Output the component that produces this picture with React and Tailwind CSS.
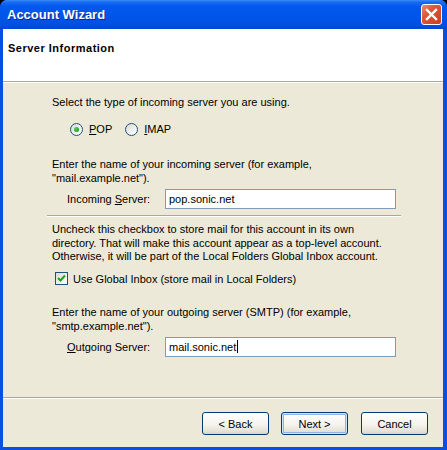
import React from "react";

function Radio({ checked }) {
  return (
    <span className="flex h-[13px] w-[13px] shrink-0 items-center justify-center rounded-full border border-[#1c5180] bg-[linear-gradient(135deg,#dcdcd5,#ffffff)]">
      {checked ? (
        <span className="h-[5px] w-[5px] rounded-full bg-[radial-gradient(circle_at_35%_35%,#55d355,#21a121_70%)]" />
      ) : null}
    </span>
  );
}

function Checkbox() {
  return (
    <span className="flex h-[13px] w-[13px] shrink-0 items-center justify-center border border-[#1c5180] bg-[linear-gradient(135deg,#dcdcd5,#ffffff)]">
      <svg width="11" height="11" viewBox="0 0 11 11">
        <path d="M2 5 L4.5 7.5 L9 2.5" fill="none" stroke="#21a121" strokeWidth="2" />
      </svg>
    </span>
  );
}

function XpButton({ children, isDefault }) {
  return (
    <button
      type="button"
      className={`h-[23px] w-[67px] rounded-[3px] border border-[#003c74] bg-[linear-gradient(to_bottom,#ffffff_0%,#f4f3ee_55%,#e3e0d6_90%,#d6d0c5_100%)] text-[11px] text-black ${
        isDefault
          ? "shadow-[inset_0_0_0_1px_#cee7ff,inset_0_0_0_2px_#8fb2ef]"
          : ""
      }`}
    >
      {children}
    </button>
  );
}

function ServerRow({ label, value, caret }) {
  return (
    <div className="flex items-center pl-[15px]">
      <span className="w-[98px]">{label}</span>
      <div className="flex h-[20px] w-[231px] items-center border border-[#7f9db9] bg-white pl-[3px]">
        <span>{value}</span>
        {caret ? <span className="ml-px h-[13px] w-px bg-black" /> : null}
      </div>
    </div>
  );
}

export default function App() {
  return (
    <div className="h-[450px] w-[447px] bg-black font-['Liberation_Sans',Arial,sans-serif] text-[11px] leading-[14px] text-black">
      <div className="flex h-full flex-col rounded-t-[7px] bg-[#0a4ee4]">
        <div className="flex h-[29px] shrink-0 items-center justify-between rounded-t-[7px] bg-[linear-gradient(to_bottom,#3c8cf7_0%,#1a6cf2_7%,#0058ee_22%,#0055e8_60%,#004fe0_88%,#0046d3_100%)] pl-[7px] pr-[5px]">
          <span className="text-[13px] font-bold text-white [text-shadow:1px_1px_#0c2a8c]">
            Account Wizard
          </span>
          <span className="flex h-[21px] w-[21px] items-center justify-center rounded-[3px] border border-white bg-[linear-gradient(135deg,#ec8c6c_0%,#e0573a_35%,#c8401f_100%)]">
            <svg width="13" height="13" viewBox="0 0 13 13">
              <path d="M2 2 L11 11 M11 2 L2 11" stroke="white" strokeWidth="2.4" strokeLinecap="square" />
            </svg>
          </span>
        </div>

        <div className="flex flex-1 flex-col pb-[3px] pl-[3px] pr-[4px]">
          <div className="flex flex-1 flex-col bg-[#ece9d8]">
            <div className="h-[52px] shrink-0 bg-white pl-[5px] pt-[12px] font-bold tracking-[0.5px]">
              Server Information
            </div>
            <div className="h-px bg-[#aca899]" />
            <div className="h-px bg-white" />

            <div className="flex-1 pl-[49px]">
              <p className="mt-[12px]">Select the type of incoming server you are using.</p>

              <div className="mt-[13px] flex items-center pl-[18px]">
                <Radio checked />
                <span className="ml-[6px]">
                  <u className="underline-offset-1">P</u>OP
                </span>
                <span className="ml-[13px]">
                  <Radio />
                </span>
                <span className="ml-[6px]">
                  <u className="underline-offset-1">I</u>MAP
                </span>
              </div>

              <p className="mt-[21px]">
                Enter the name of your incoming server (for example,
                <br />
                "mail.example.net").
              </p>

              <div className="mt-[4px]">
                <ServerRow
                  label={
                    <>
                      Incoming <u className="underline-offset-1">S</u>erver:
                    </>
                  }
                  value="pop.sonic.net"
                />
              </div>

              <div className="-ml-[5px] mt-[6px] w-[354px]">
                <div className="h-px bg-[#aca899]" />
                <div className="h-px bg-white" />
              </div>

              <p className="mt-[6px] leading-[13.5px]">
                Uncheck this checkbox to store mail for this account in its own
                <br />
                directory. That will make this account appear as a top-level account.
                <br />
                Otherwise, it will be part of the Local Folders Global Inbox account.
              </p>

              <div className="mt-[8px] flex items-center pl-[3px]">
                <Checkbox />
                <span className="ml-[5px]">Use Global Inbox (store mail in Local Folders)</span>
              </div>

              <p className="mt-[19px]">
                Enter the name of your outgoing server (SMTP) (for example,
                <br />
                "smtp.example.net").
              </p>

              <div className="mt-[4px]">
                <ServerRow
                  label={
                    <>
                      <u className="underline-offset-1">O</u>utgoing Server:
                    </>
                  }
                  value="mail.sonic.net"
                  caret
                />
              </div>
            </div>

            <div className="h-px bg-[#aca899]" />
            <div className="h-px bg-white" />
            <div className="flex h-[48px] shrink-0 justify-end pr-[15px] pt-[13px]">
              <XpButton>&lt; Back</XpButton>
              <span className="ml-[12px]">
                <XpButton isDefault>Next &gt;</XpButton>
              </span>
              <span className="ml-[13px]">
                <XpButton>Cancel</XpButton>
              </span>
            </div>
          </div>
        </div>
      </div>
    </div>
  );
}
